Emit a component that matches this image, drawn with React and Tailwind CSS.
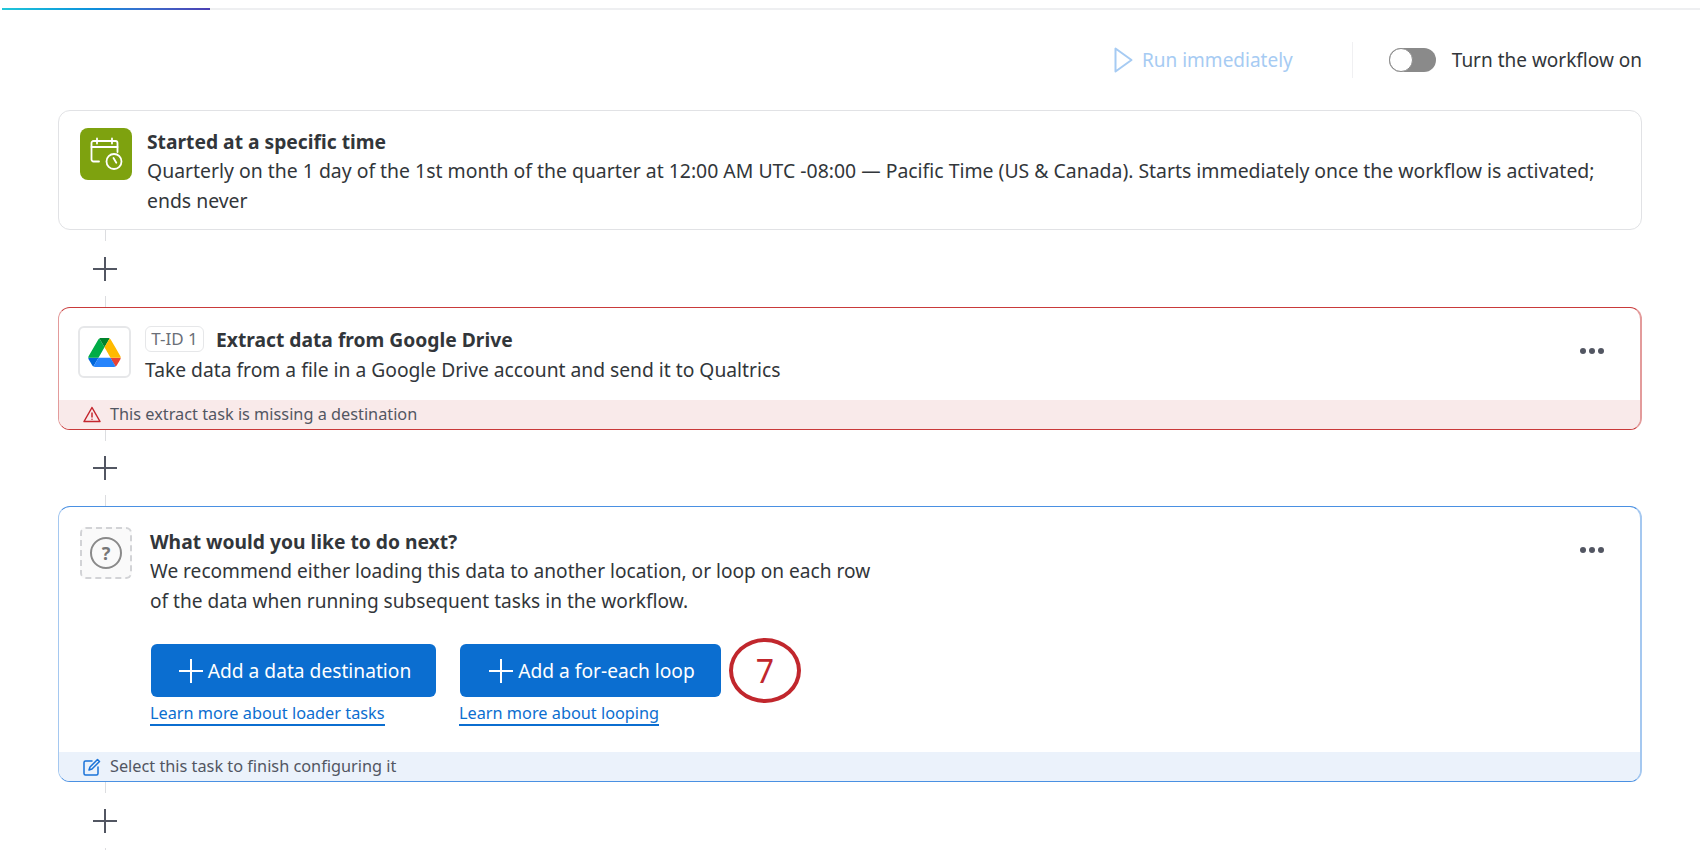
const font = { fontFamily: '"Noto Sans", sans-serif' };

function PlusIcon({ className }) {
  return (
    <svg viewBox="0 0 24 24" className={className} fill="none" stroke="currentColor" strokeWidth="2">
      <path d="M12 0v24M0 12h24" />
    </svg>
  );
}

function Connector({ tall }) {
  return (
    <div className={tall ? "flex h-[77px] w-[94px] flex-col items-center justify-between" : "flex h-[76px] w-[94px] flex-col items-center justify-between"}>
      <div className="h-[11px] w-[1px] bg-[#dcdde0]" />
      <PlusIcon className="h-6 w-6 text-[#525662]" />
      <div className="h-[11px] w-[1px] bg-[#dcdde0]" />
    </div>
  );
}

function Dots() {
  return (
    <div className="flex gap-[3px]">
      <span className="h-[6px] w-[6px] rounded-full bg-[#525662]" />
      <span className="h-[6px] w-[6px] rounded-full bg-[#525662]" />
      <span className="h-[6px] w-[6px] rounded-full bg-[#525662]" />
    </div>
  );
}

function Drive() {
  return (
    <svg viewBox="0 0 87.3 78" className="h-[29px] w-[33px]">
      <path d="m6.6 66.85 3.85 6.65c.8 1.4 1.95 2.5 3.3 3.3l13.75-23.8h-27.5c0 1.55.4 3.1 1.2 4.5z" fill="#0066da" />
      <path d="m43.65 25-13.75-23.8c-1.35.8-2.5 1.9-3.3 3.3l-25.4 44a9.06 9.06 0 0 0 -1.2 4.5h27.5z" fill="#00ac47" />
      <path d="m73.55 76.8c1.35-.8 2.5-1.9 3.3-3.3l1.6-2.75 7.65-13.25c.8-1.4 1.2-2.95 1.2-4.5h-27.502l5.852 11.5z" fill="#ea4335" />
      <path d="m43.65 25 13.75-23.8c-1.35-.8-2.9-1.2-4.5-1.2h-18.5c-1.6 0-3.15.45-4.5 1.2z" fill="#00832d" />
      <path d="m59.8 53h-32.3l-13.75 23.8c1.35.8 2.9 1.2 4.5 1.2h50.8c1.6 0 3.15-.45 4.5-1.2z" fill="#2684fc" />
      <path d="m73.4 26.5-12.7-22c-.8-1.4-1.95-2.5-3.3-3.3l-13.75 23.8 16.15 28h27.45c0-1.55-.4-3.1-1.2-4.5z" fill="#ffba00" />
    </svg>
  );
}

function CalendarClock() {
  return (
    <svg viewBox="0 0 34 34" className="h-[34px] w-[34px]" fill="none" stroke="#fff" strokeWidth="1.8" strokeLinecap="round" strokeLinejoin="round">
      <path d="M10 24.5H4.5a2 2 0 0 1-2-2V6a2 2 0 0 1 2-2h22a2 2 0 0 1 2 2v9" />
      <path d="M2.5 10h26M8 1.5v5M23 1.5v5" />
      <circle cx="25" cy="24.5" r="7.5" />
      <path d="M24.5 21l2.8 4.8" />
    </svg>
  );
}

export default function App() {
  return (
    <div className="h-[850px] overflow-hidden bg-white text-[19.25px] leading-[29px] text-[#32363a]" style={font}>
      <div className="pt-2">
        <div className="ml-[2px] h-[2px] bg-[#eeeff1]">
          <div className="h-[2px] w-[208px] bg-gradient-to-r from-[#22c7d8] via-[#0f88dc] to-[#4b3fb3]" />
        </div>
      </div>

      <div className="flex h-[100px] items-center justify-end px-[58px] text-[19px]">
        <div className="flex items-center gap-[9px] text-[#a6cbf3]">
          <svg viewBox="0 0 19 26" className="h-[26px] w-[19px]" fill="none" stroke="#a6cbf3" strokeWidth="2" strokeLinejoin="round">
            <path d="M1.5 1.5v23L17.5 13z" />
          </svg>
          <span>Run immediately</span>
        </div>
        <div className="ml-[59px] mr-[36px] h-9 w-[1px] bg-[#f0f0f2]" />
        <div className="flex items-center gap-[16px]">
          <div className="flex h-6 w-[47px] items-center rounded-full bg-[#8a8a8a]">
            <div className="h-6 w-6 rounded-full border border-[#8a8a8a] bg-white" />
          </div>
          <span>Turn the workflow on</span>
        </div>
      </div>

      <div className="px-[58px]">
        <div className="flex h-[120px] gap-[15px] rounded-xl border border-[#e1e2e5] pl-[21px] pr-[30px] pt-[17px]">
          <div className="flex h-[52px] w-[52px] shrink-0 items-center justify-center rounded-lg bg-[#7ea20f]">
            <CalendarClock />
          </div>
          <div className="-mt-[1px]">
            <div className="font-bold">Started at a specific time</div>
            <div className="text-[19.42px] leading-[30px]">
              Quarterly on the 1 day of the 1st month of the quarter at 12:00 AM UTC -08:00 — Pacific Time (US &amp; Canada). Starts immediately once the workflow is activated; ends never
            </div>
          </div>
        </div>

        <Connector tall />

        <div className="flex h-[123px] flex-col overflow-hidden rounded-xl border border-[#e39b9b] border-t-[#c93a3a] border-b-[#c93a3a] border-r-2">
          <div className="relative flex flex-1 gap-[14px] pl-[19px] pt-[18px]">
            <div className="flex h-[52px] w-[53px] shrink-0 items-center justify-center rounded-md border-2 border-[#e6e7e9]">
              <Drive />
            </div>
            <div>
              <div className="flex items-start gap-3">
                <span className="flex h-[26px] w-[59px] items-center justify-center rounded-md border border-[#e6e7e9] pb-[2px] text-[17px] text-[#6b6f78]">T-ID 1</span>
                <span className="-mt-[1px] font-bold">Extract data from Google Drive</span>
              </div>
              <div className="mt-[1px]">Take data from a file in a Google Drive account and send it to Qualtrics</div>
            </div>
            <div className="absolute right-[36px] top-[40px]"><Dots /></div>
          </div>
          <div className="flex h-[29px] items-center gap-[9px] bg-[#f9eaea] pl-[24px] text-[16.3px] leading-none text-[#525662]">
            <svg viewBox="0 0 18 17" className="h-[17px] w-[18px]" fill="none" stroke="#c4262e" strokeWidth="1.5" strokeLinejoin="round">
              <path d="M9 1.5 1 15.5h16z" />
              <path d="M9 6.5v5M9 12.7v1.1" />
            </svg>
            <span>This extract task is missing a destination</span>
          </div>
        </div>

        <Connector />

        <div className="flex h-[276px] flex-col overflow-hidden rounded-xl border border-[#a5c8f0] border-t-[#4a90e2] border-b-[#4a90e2] border-r-2">
          <div className="relative flex flex-1 gap-[18px] pl-[21px] pt-[20px]">
            <div className="flex h-[52px] w-[52px] shrink-0 items-center justify-center rounded-md border-2 border-dashed border-[#d2d3d6] bg-[#fafafa]">
              <div className="flex h-8 w-8 items-center justify-center rounded-full border-2 border-[#8a8a8a] text-[18px] font-bold leading-none text-[#777]">?</div>
            </div>
            <div>
              <div className="font-bold">What would you like to do next?</div>
              <div className="text-[19.1px] leading-[30px]">We recommend either loading this data to another location, or loop on each row</div>
              <div className="text-[19.1px] leading-[30px]">of the data when running subsequent tasks in the workflow.</div>
              <div className="mt-[28px] flex items-start">
                <div className="w-[309px]">
                  <div className="ml-[1px] flex h-[53px] w-[285px] items-center justify-center gap-[5px] rounded-md bg-[#0b6ed0] pl-[3px] text-[19.2px] text-white">
                    <PlusIcon className="h-6 w-6" />
                    <span>Add a data destination</span>
                  </div>
                  <div className="mt-[1px] inline-block border-b-2 border-[#0b6ed0] text-[16.3px] leading-[22px] text-[#0b6ed0]">Learn more about loader tasks</div>
                </div>
                <div>
                  <div className="ml-[1px] flex h-[53px] w-[261px] items-center justify-center gap-[5px] rounded-md bg-[#0b6ed0] pl-[3px] text-[19.2px] text-white">
                    <PlusIcon className="h-6 w-6" />
                    <span>Add a for-each loop</span>
                  </div>
                  <div className="mt-[1px] inline-block border-b-2 border-[#0b6ed0] text-[16.3px] leading-[22px] text-[#0b6ed0]">Learn more about looping</div>
                </div>
                <div className="ml-2 -mt-[6px] flex h-[65px] w-[72px] items-center justify-center rounded-[50%] border-[4px] border-[#c1272d] text-[32px] leading-none text-[#c1272d]">7</div>
              </div>
            </div>
            <div className="absolute right-[36px] top-[40px]"><Dots /></div>
          </div>
          <div className="flex h-[29px] items-center gap-[9px] bg-[#ebf2fb] pl-[24px] text-[16.3px] leading-none text-[#525662]">
            <svg viewBox="0 0 18 18" className="h-[18px] w-[18px]" fill="none" stroke="#1a73d9" strokeWidth="1.5" strokeLinecap="round" strokeLinejoin="round">
              <path d="M9 3H2.5A1.5 1.5 0 0 0 1 4.5v11A1.5 1.5 0 0 0 2.5 17h11a1.5 1.5 0 0 0 1.5-1.5V9" />
              <path d="M14.5 1.5l2 2L9 11l-3 1 1-3z" />
            </svg>
            <span>Select this task to finish configuring it</span>
          </div>
        </div>

        <Connector tall />
      </div>
    </div>
  );
}
